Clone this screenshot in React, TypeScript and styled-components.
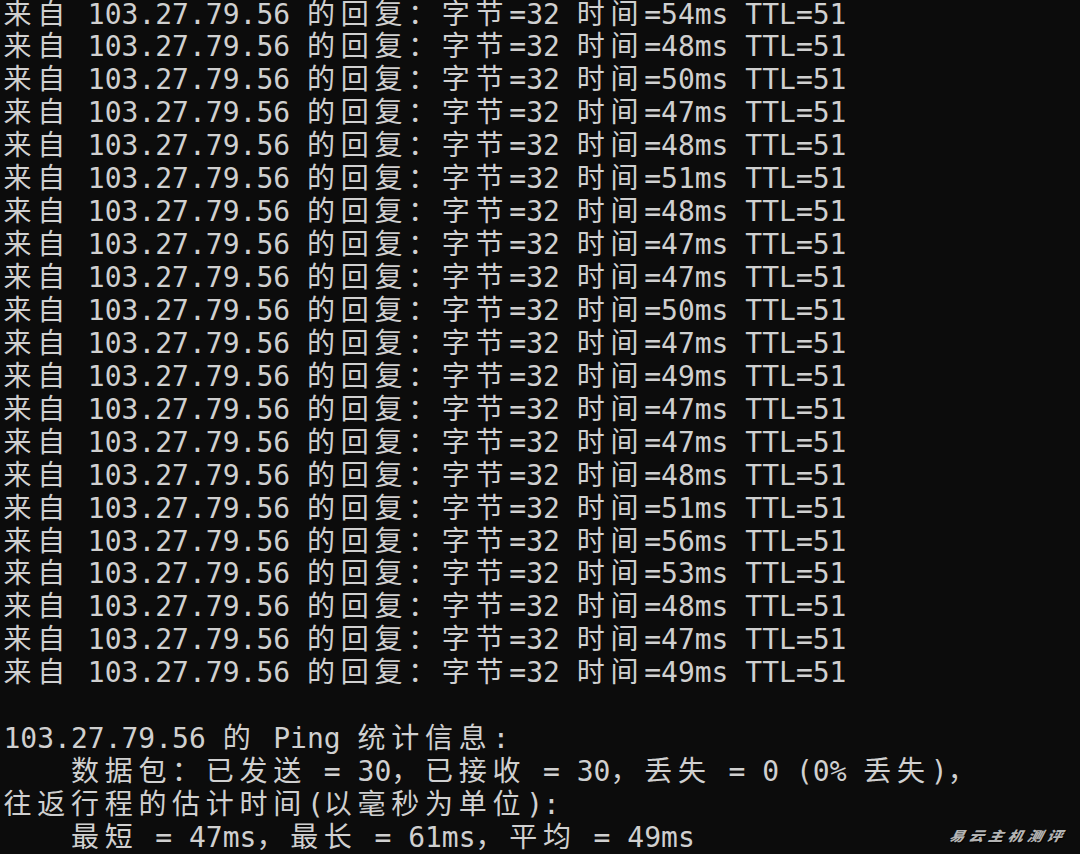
import React from "react";
import styled, { createGlobalStyle } from "styled-components";

const GlobalStyle = createGlobalStyle`
  html, body {
    margin: 0;
    padding: 0;
    background: #0c0c0c;
    overflow: hidden;
  }
  #root {
    width: 1080px;
    height: 854px;
  }
`;

const Screen = styled.div`
  position: relative;
  width: 1080px;
  height: 854px;
  background: #0c0c0c;
  overflow: hidden;
`;

const Terminal = styled.div`
  display: flex;
  flex-direction: column;
  margin-top: -1.5px;
  padding-left: 3.5px;
  font-family: "DejaVu Sans Mono", monospace;
  font-size: 28px;
  color: #d0d0d0;
`;

const Line = styled.div`
  height: 32.95px;
  line-height: 32.95px;
  white-space: pre;
`;

const Wide = styled.span`
  font-family: "Noto Sans CJK SC", "DejaVu Sans", sans-serif;
  font-size: 28px;
  letter-spacing: 5.72px;
  line-height: 0.9;
`;

const Watermark = styled.div`
  position: absolute;
  right: 13px;
  bottom: 8px;
  font-family: "Noto Sans CJK SC", sans-serif;
  font-size: 15px;
  font-weight: 900;
  font-style: italic;
  letter-spacing: 4.5px;
  color: #b4b4b4;
  text-shadow: 1px 1px 1px #000;
  transform: skewX(-14deg) scaleY(0.9);
`;

const WIDE_RE = /([\u2e80-\u9fff\uff00-\uffef\u3000-\u303f]+)/;

const TermLine: React.FC<{ text: string }> = ({ text }) => {
  const parts = text.split(WIDE_RE).filter((p) => p.length > 0);
  return (
    <Line>
      {parts.length === 0
        ? " "
        : parts.map((p, i) =>
            WIDE_RE.test(p) ? <Wide key={i}>{p}</Wide> : <span key={i}>{p}</span>
          )}
    </Line>
  );
};

const times = [54, 48, 50, 47, 48, 51, 48, 47, 47, 50, 47, 49, 47, 47, 48, 51, 56, 53, 48, 47, 49];

const lines: string[] = [
  ...times.map((t) => `来自 103.27.79.56 的回复：字节=32 时间=${t}ms TTL=51`),
  "",
  "103.27.79.56 的 Ping 统计信息:",
  "    数据包：已发送 = 30，已接收 = 30，丢失 = 0 (0% 丢失)，",
  "往返行程的估计时间(以毫秒为单位):",
  "    最短 = 47ms，最长 = 61ms，平均 = 49ms",
];

export default function App() {
  return (
    <Screen>
      <GlobalStyle />
      <Terminal>
        {lines.map((l, i) => (
          <TermLine key={i} text={l} />
        ))}
      </Terminal>
      <Watermark>易云主机测评</Watermark>
    </Screen>
  );
}
